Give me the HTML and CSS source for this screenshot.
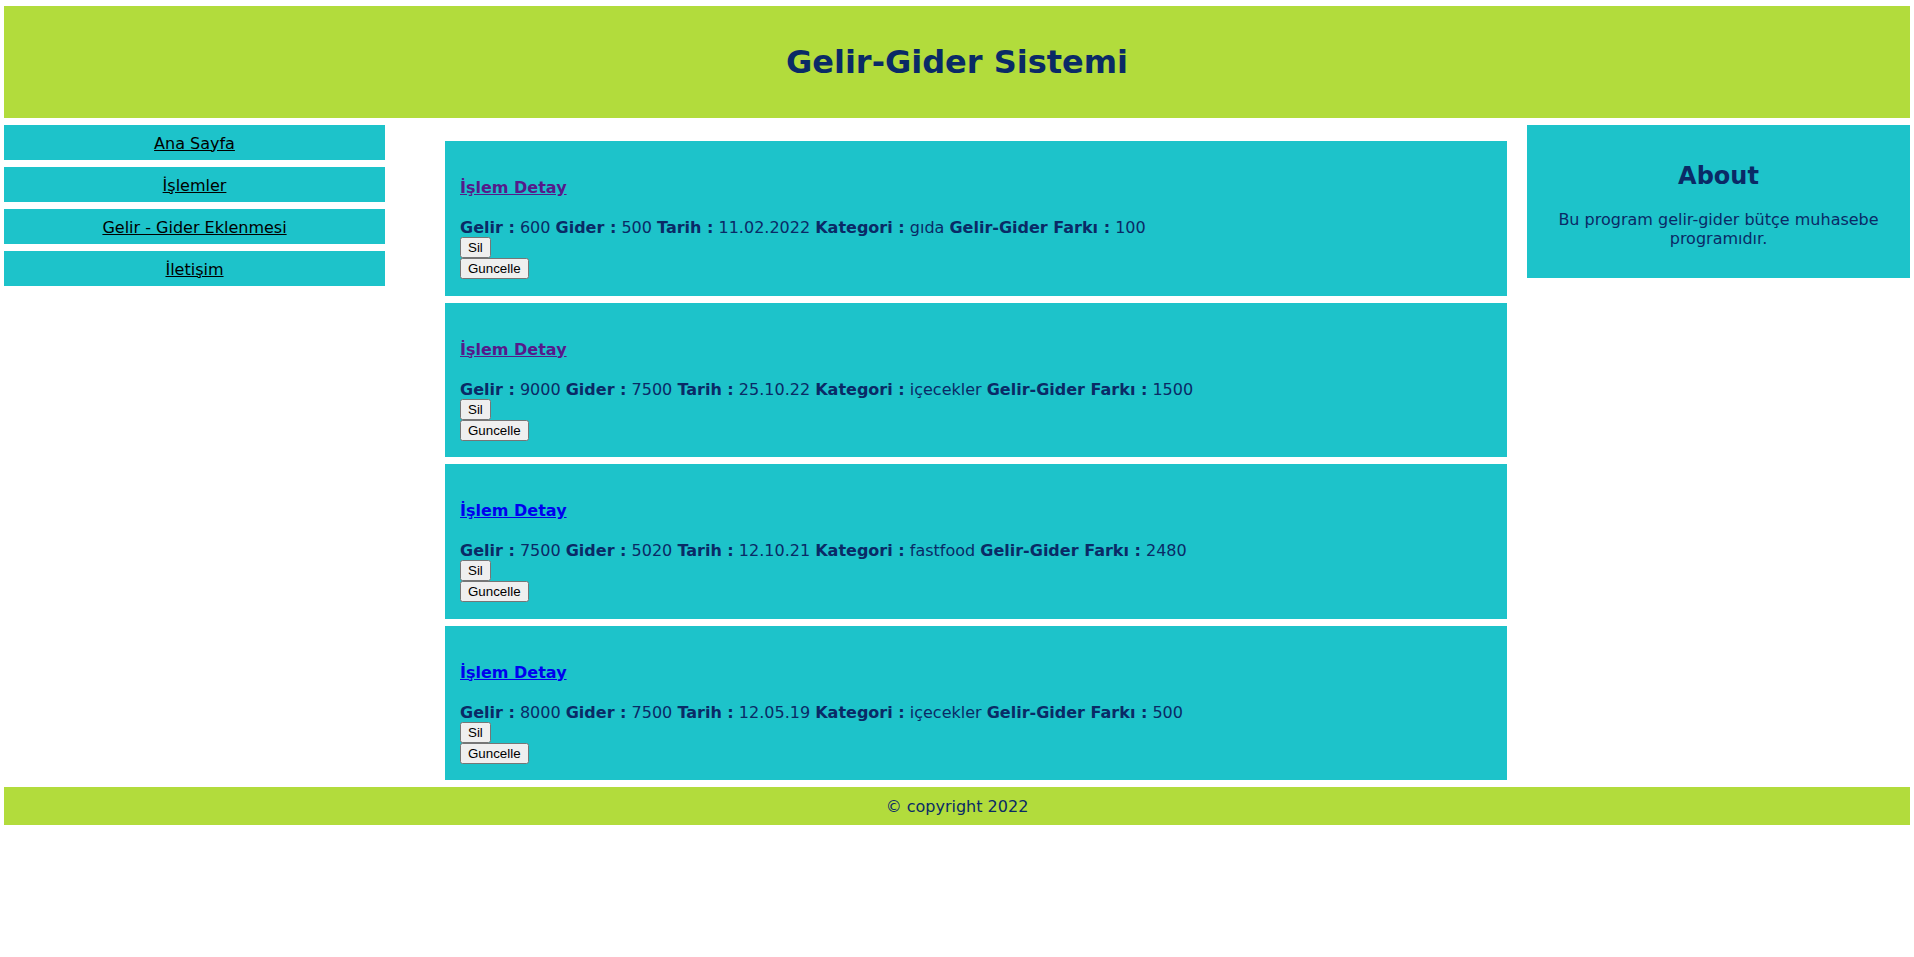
FILE: index.html
```html
<!DOCTYPE html>
<html lang="tr">
<head>
<meta charset="utf-8">
<title>Gelir-Gider Sistemi</title>
<link rel="stylesheet" href="styles.css">
</head>
<body>
<div class="page">
  <header class="top">
    <h1 class="title">Gelir-Gider Sistemi</h1>
  </header>
  <nav class="side-nav">
    <a class="nav-item" href="#">Ana Sayfa</a>
    <a class="nav-item" href="#">İşlemler</a>
    <a class="nav-item" href="#">Gelir - Gider Eklenmesi</a>
    <a class="nav-item" href="#">İletişim</a>
  </nav>
  <main class="content">
    <ul class="cards">
      <li class="card">
        <h4 class="card-title"><a class="link visited" href="#">İşlem Detay</a></h4>
        <div class="data"><b>Gelir :</b> 600 <b>Gider :</b> 500 <b>Tarih :</b> 11.02.2022 <b>Kategori :</b> gıda <b>Gelir-Gider Farkı :</b> 100</div>
        <div class="actions"><button class="btn">Sil</button><button class="btn">Guncelle</button></div>
      </li>
      <li class="card">
        <h4 class="card-title"><a class="link visited" href="#">İşlem Detay</a></h4>
        <div class="data"><b>Gelir :</b> 9000 <b>Gider :</b> 7500 <b>Tarih :</b> 25.10.22 <b>Kategori :</b> içecekler <b>Gelir-Gider Farkı :</b> 1500</div>
        <div class="actions"><button class="btn">Sil</button><button class="btn">Guncelle</button></div>
      </li>
      <li class="card">
        <h4 class="card-title"><a class="link" href="#">İşlem Detay</a></h4>
        <div class="data"><b>Gelir :</b> 7500 <b>Gider :</b> 5020 <b>Tarih :</b> 12.10.21 <b>Kategori :</b> fastfood <b>Gelir-Gider Farkı :</b> 2480</div>
        <div class="actions"><button class="btn">Sil</button><button class="btn">Guncelle</button></div>
      </li>
      <li class="card">
        <h4 class="card-title"><a class="link" href="#">İşlem Detay</a></h4>
        <div class="data"><b>Gelir :</b> 8000 <b>Gider :</b> 7500 <b>Tarih :</b> 12.05.19 <b>Kategori :</b> içecekler <b>Gelir-Gider Farkı :</b> 500</div>
        <div class="actions"><button class="btn">Sil</button><button class="btn">Guncelle</button></div>
      </li>
    </ul>
  </main>
  <aside class="about">
    <h2 class="about-title">About</h2>
    <p class="about-text">Bu program gelir-gider bütçe muhasebe programıdır.</p>
  </aside>
  <footer class="bottom">© copyright 2022</footer>
</div>
</body>
</html>
```
FILE: styles.css
```css
body {
  margin: 6px 4px;
  font-family: "DejaVu Sans", Verdana, sans-serif;
  font-size: 16px;
  color: #0a2a66;
  background: #ffffff;
}

.page {
  display: grid;
  grid-template-columns: 381px 1fr 383px;
  column-gap: 20px;
  row-gap: 7px;
  align-items: start;
}

.top {
  grid-column: 1 / -1;
  background: #b2dc3c;
  height: 112px;
  display: flex;
  align-items: center;
  justify-content: center;
}

.title {
  margin: 0;
  font-size: 32px;
  font-weight: bold;
  color: #0a2a66;
}

.side-nav {
  display: flex;
  flex-direction: column;
  gap: 7px;
}

.nav-item {
  display: block;
  background: #1dc3ca;
  color: #000000;
  text-align: center;
  padding: 8.5px 0 7.5px;
  line-height: 19px;
}

.content {
  min-width: 0;
}

.cards {
  list-style: none;
  margin: 16px 0 0;
  padding: 0 0 0 40px;
  display: flex;
  flex-direction: column;
  gap: 7px;
}

.card {
  background: #1dc3ca;
  padding: 15px 15px 16.5px;
}

.card-title {
  margin: 22px 0 21px;
  font-size: 16px;
}

.link {
  color: #0000ee;
}

.link.visited {
  color: #551a8b;
}

.data b {
  font-weight: bold;
}

.actions {
  margin-top: 0;
}

.btn {
  display: block;
}

.about {
  background: #1dc3ca;
  text-align: center;
  padding: 17px 15px 14px;
}

.about-title {
  margin: 20px 0;
  font-size: 24px;
}

.about-text {
  margin: 16px 0;
}

.bottom {
  grid-column: 1 / -1;
  background: #b2dc3c;
  text-align: center;
  padding: 9.5px 0;
}
```
